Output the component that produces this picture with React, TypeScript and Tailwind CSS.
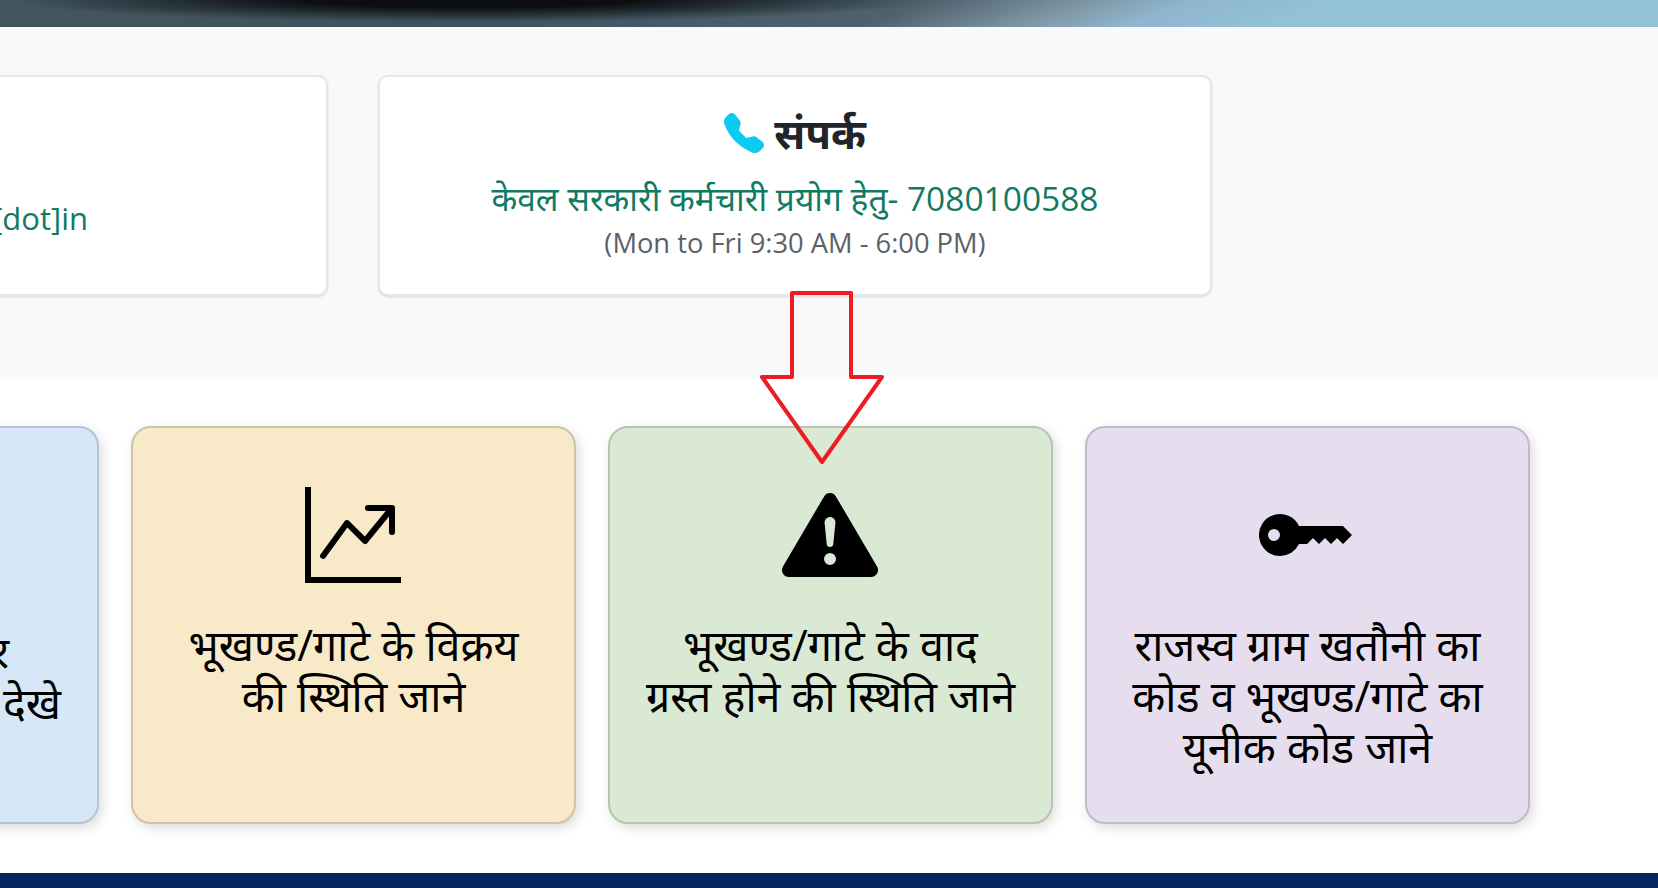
import { BsExclamationTriangleFill, BsGraphUpArrow, BsKeyFill, BsTelephoneFill } from 'react-icons/bs';

const cardShadow = 'shadow-[3px_4px_12px_rgba(0,0,0,0.14)]';

export default function App() {
  return (
    <div className="relative h-[888px] overflow-hidden bg-white font-['Open_Sans','Noto_Sans',sans-serif]">
      <div className="h-[27px] bg-[radial-gradient(ellipse_460px_22px_at_470px_0px,#0c0f12_35%,transparent_100%),linear-gradient(160deg,#43565f_0%,#3f535e_31%,#4f636e_54%,#7e96a3_63%,#8fb5cf_69%,#93c1d6_77%,#93c1d6_100%)]" />

      <div className="flex h-[350px] gap-[50px] bg-[#f8f9fa] pt-[48px]">
        <div className="-ml-[506px] h-[221px] w-[834px] shrink-0 rounded-[10px] border-2 border-[#e4e6ea] bg-white pr-[238px] pt-[118px] text-right text-[31px] text-[#0f7b63] shadow-sm">
          [dot]in
        </div>
        <div className="h-[221px] w-[834px] shrink-0 rounded-[10px] border-2 border-[#e4e6ea] bg-white pt-[26px] text-center shadow-sm">
          <div className="flex items-center justify-center gap-[10px] text-[42px] font-bold leading-[60px] text-[#212529]">
            <BsTelephoneFill className="h-10 w-10 text-[#0dcaf0]" />
            संपर्क
          </div>
          <p className="mt-[11px] text-[33.5px] leading-[48px] text-[#0f7b63]">केवल सरकारी कर्मचारी प्रयोग हेतु- 7080100588</p>
          <p className="mt-[3px] text-[27.3px] leading-9 text-[#5c6166]">(Mon to Fri 9:30 AM - 6:00 PM)</p>
        </div>
      </div>

      <div className="flex gap-[32px] pt-[49px] text-[43px] leading-[51px] text-black">
        <div className={`-ml-[346px] h-[398px] w-[445px] shrink-0 rounded-[20px] border-2 border-[#b5c3d2] bg-[#d6e8f8] pr-[36px] pt-[198px] text-right ${cardShadow}`}>
          <div className="mr-[52px]">र</div>
          <div>देखे</div>
        </div>
        <div className={`flex h-[398px] w-[445px] shrink-0 flex-col items-center rounded-[20px] border-2 border-[#cdc3a6] bg-[#f8e9c8] pt-[59px] text-center ${cardShadow}`}>
          <BsGraphUpArrow size={96} className="-ml-[2px]" />
          <p className="mt-[36px]">भूखण्ड/गाटे के विक्रय<br />की स्थिति जाने</p>
        </div>
        <div className={`flex h-[398px] w-[445px] shrink-0 flex-col items-center rounded-[20px] border-2 border-[#b7c4b0] bg-[#d9e9d4] pt-[59px] text-center ${cardShadow}`}>
          <BsExclamationTriangleFill size={96} className="-ml-[2px]" />
          <p className="mt-[36px]">भूखण्ड/गाटे के वाद<br />ग्रस्त होने की स्थिति जाने</p>
        </div>
        <div className={`flex h-[398px] w-[445px] shrink-0 flex-col items-center rounded-[20px] border-2 border-[#bfbbcc] bg-[#e6deef] pt-[59px] text-center ${cardShadow}`}>
          <BsKeyFill size={96} className="-ml-[2px]" />
          <p className="mt-[36px]">राजस्व ग्राम खतौनी का<br />कोड व भूखण्ड/गाटे का<br />यूनीक कोड जाने</p>
        </div>
      </div>

      <div className="absolute inset-x-0 bottom-0 h-[15px] bg-[#05265f]" />

      <svg className="absolute left-[755px] top-[288px]" width="134" height="180" viewBox="755 288 134 180" fill="none">
        <path d="M792 377V293H851V377H882L822 462L762 377Z" stroke="#ed1c24" strokeWidth="4" strokeLinejoin="round" />
      </svg>
    </div>
  );
}
